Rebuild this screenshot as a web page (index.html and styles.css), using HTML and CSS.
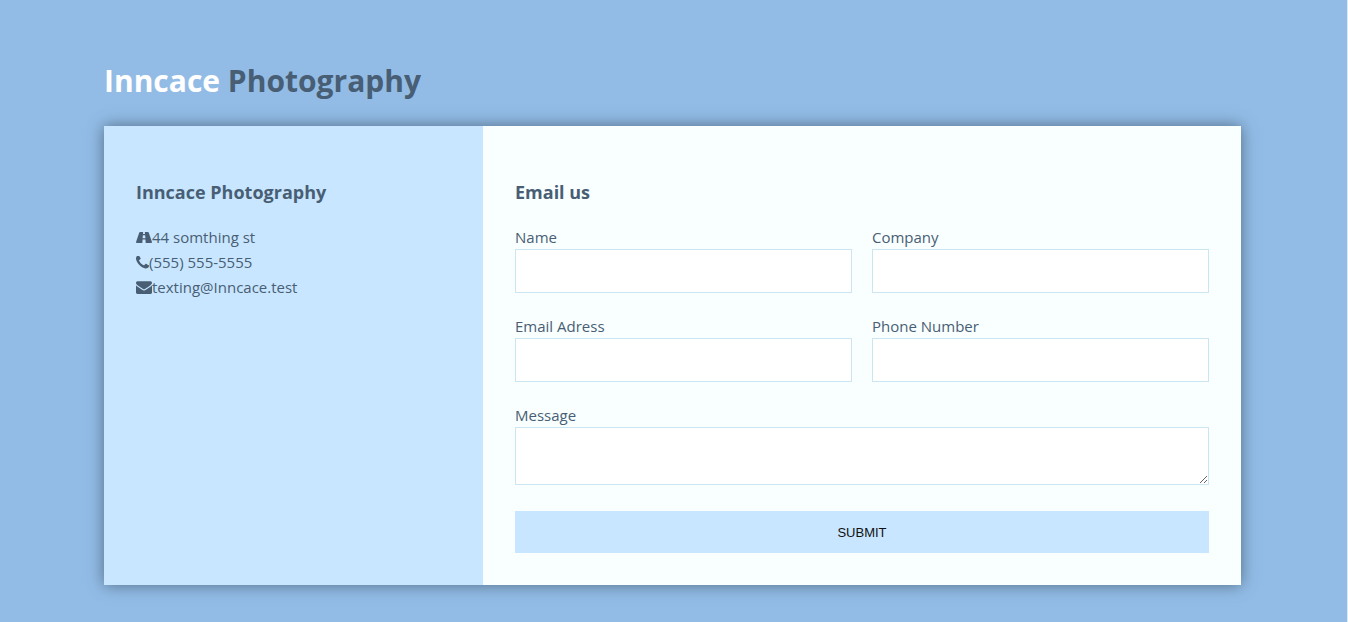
FILE: index.html
```html
<!DOCTYPE html>
<html lang="en">
<head>
<meta charset="utf-8">
<title>Inncace Photography</title>
<link rel="stylesheet" href="styles.css">
</head>
<body>
<div class="container">
  <h1 class="brand"><span class="brand-accent">Inncace</span> Photography</h1>
  <main class="card">
    <section class="info">
      <h2 class="heading">Inncace Photography</h2>
      <ul class="contact-list">
        <li><svg class="icon icon-road" viewBox="0 0 17 12" preserveAspectRatio="none" aria-hidden="true"><path fill-rule="evenodd" d="M4.2 0H7.6L7.4 2.3H9.6L9.4 0H12.8Q13.3 0 13.5.5L16.8 10.4Q17.2 12 16.3 12H10.3L10 8.3H7L6.7 12H.7Q-.2 12 .2 10.4L3.5.5Q3.7 0 4.2 0ZM7.3 3.6L7 6.8H10L9.7 3.6Z"/></svg>44 somthing st</li>
        <li><svg class="icon icon-phone" viewBox="192 192 1408 1408" aria-hidden="true"><path d="M1600 1240q0 27-10 70.5t-21 68.5q-21 50-122 106-94 51-186 51-27 0-53-3.5t-57-12.5-47-14.5-55.5-20.5-49.5-18q-98-35-175-83-127-79-264-216t-216-264q-48-77-83-175-3-9-18-49.5t-20.5-55.5-14.5-47-12.5-57-3.5-53q0-92 51-186 56-101 106-122 25-11 68.5-21t70.5-10q14 0 21 3 18 6 53 76 11 19 30 54t35 63.5 31 53.5q3 4 17.5 25t21.5 35.5 7 28.5q0 20-28.5 50t-62 55-62 53-28.5 46q0 9 5 22.5t8.5 20.5 14 24 11.5 19q76 137 174 235t235 174q2 1 19 11.5t24 14 20.5 8.5 22.5 5q18 0 46-28.5t53-62 55-62 50-28.5q14 0 28.5 7t35.5 21.5 25 17.5q25 15 53.5 31t63.5 35 54 30q70 35 76 53 3 7 3 21z"/></svg>(555) 555-5555</li>
        <li><svg class="icon icon-mail" viewBox="0 234 1792 1430" aria-hidden="true"><path d="M1792 710v794q0 66-47 113t-113 47h-1472q-66 0-113-47t-47-113v-794q44 49 101 87 362 246 497 345 57 42 92.5 65.5t94.5 48 110 24.5h2q51 0 110-24.5t94.5-48 92.5-65.5q170-123 498-345 57-39 100-87zm0-294q0 79-49 151t-122 123q-376 261-468 325-10 7-42.5 31t-54 38.5-52 32.5-57.5 27-50 9h-2q-23 0-50-9t-57.5-27-52-32.5-54-38.5-42.5-31q-91-64-262-182.5t-205-142.5q-62-42-117-115.5t-55-136.5q0-78 41.5-130t118.5-52h1472q65 0 112.5 47t47.5 113z"/></svg>texting@Inncace.test</li>
      </ul>
    </section>
    <section class="contact">
      <h2 class="heading">Email us</h2>
      <form class="form">
        <div class="field"><label for="name">Name</label><input id="name" name="name" type="text"></div>
        <div class="field"><label for="company">Company</label><input id="company" name="company" type="text"></div>
        <div class="field"><label for="email">Email Adress</label><input id="email" name="email" type="email"></div>
        <div class="field"><label for="phone">Phone Number</label><input id="phone" name="phone" type="tel"></div>
        <div class="field field-message"><label for="message">Message</label><textarea id="message" name="message" rows="2"></textarea></div>
        <button class="submit" type="submit">SUBMIT</button>
      </form>
    </section>
  </main>
</div>
</body>
</html>
```
FILE: styles.css
```css
* {
  box-sizing: border-box;
}

body {
  margin: 0;
  min-height: 100vh;
  border-right: 1px solid #dbe9f8;
  background: #92bce6;
  background-clip: padding-box;
  color: #485e74;
  font-family: "Segoe UI", "Open Sans", "Noto Sans", sans-serif;
  font-size: 15px;
  line-height: 25px;
}

.container {
  padding: 55px 106px 37px 104px;
}

.brand {
  margin: 0 0 20px;
  font-size: 30px;
  line-height: 51px;
}

.brand-accent {
  color: #fff;
}

.card {
  display: grid;
  grid-template-columns: 1fr 2fr;
  box-shadow: 0 0 15px 0 rgba(72, 94, 116, 0.85);
}

.info,
.contact {
  padding: 32px;
}

.info {
  background: #c8e6ff;
}

.contact {
  background: #f9feff;
}

.heading {
  margin: 19px 0 18px;
  font-size: 18px;
  line-height: 30px;
}

.contact-list {
  margin: 0;
  padding: 0;
  list-style: none;
}

.contact-list li {
  display: flex;
  align-items: center;
}

.icon {
  fill: currentColor;
}

.icon-road {
  width: 16px;
  height: 11px;
}

.icon-phone {
  width: 13px;
  height: 13px;
}

.icon-mail {
  width: 16px;
  height: 13px;
}

.form {
  display: grid;
  grid-template-columns: 1fr 1fr;
  gap: 21px 20px;
}

.field {
  display: flex;
  flex-direction: column;
  line-height: 24px;
}

.field input,
.field textarea {
  width: 100%;
  margin: 0;
  padding: 12px;
  border: 1px solid #c9e6f2;
  background: #fff;
  color: inherit;
  font: 13px "Liberation Sans", Arial, sans-serif;
}

.field input {
  height: 44px;
}

.field textarea {
  height: 58px;
}

.field-message {
  grid-column: 1 / -1;
  padding-bottom: 5px;
}

.submit {
  grid-column: 1 / -1;
  padding: 13px 12px 11px;
  border: 0;
  background: #c8e6ff;
  color: #111;
  font: 13px/18px "Liberation Sans", Arial, sans-serif;
  cursor: pointer;
}
```
